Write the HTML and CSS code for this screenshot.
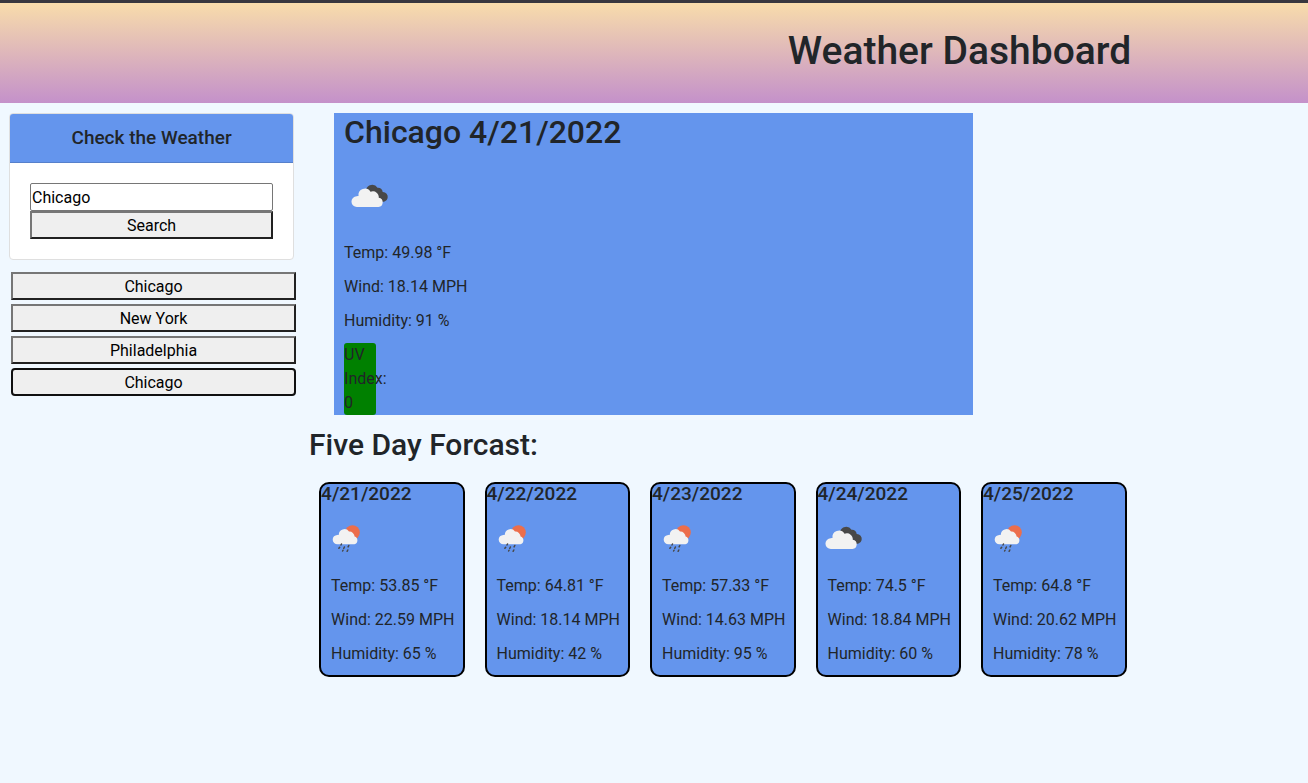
FILE: index.html
```html
<!DOCTYPE html>
<html lang="en">
<head>
<meta charset="utf-8">
<meta name="viewport" content="width=device-width, initial-scale=1">
<title>Weather Dashboard</title>
<link rel="stylesheet" href="styles.css">
</head>
<body>
<svg class="sprite" aria-hidden="true">
  <symbol id="clouds" viewBox="0 0 50 50">
    <path fill="#484848" d="M22 19a6.300 6.300 0 0 1 11.500-2.200 4.500 4.500 0 0 1 5.200 4.200 4.900 4.900 0 1 1-2 9.300z"/>
    <path fill="#f2f2f2" d="M13 36a5.400 5.400 0 0 1-.3-10.800 5 5 0 0 1 1.800-.1 6.500 6.500 0 0 1 12-4.300 6 6 0 0 1 8.300 5.900A4.700 4.700 0 0 1 34.500 36z"/>
  </symbol>
  <symbol id="sun-rain" viewBox="0 0 50 50">
    <circle cx="31.500" cy="19.500" r="7.300" fill="#ec6e4c"/>
    <path fill="#f2f2f2" d="M16.500 31.300a4.700 4.700 0 0 1-.2-9.400 5 5 0 0 1 1.500 0 5.600 5.600 0 0 1 10.200-3.300 5.200 5.200 0 0 1 5.600 5 4 4 0 0 1-.2 7.700z"/>
    <path fill="none" stroke="#484848" stroke-width="1.500" stroke-linecap="round" d="M20.500 31l-.5 1M27.800 32.500l-.7 1.400M18.700 34.300l-.8 1M23.400 34l-.7 1.500M26.800 37l-.7 1.300M22 37.300l-.4.700"/>
  </symbol>
</svg>
<header class="banner"><h1 class="banner-title">Weather Dashboard</h1></header>
<div class="layout">
  <aside class="sidebar">
    <section class="search-card">
      <h2 class="search-title"><label for="city">Check the Weather</label></h2>
      <form class="search-form">
        <input class="city-input" id="city" type="text" value="Chicago">
        <button class="city-button" type="button">Search</button>
      </form>
    </section>
    <div class="history">
      <button class="city-button" type="button">Chicago</button>
      <button class="city-button" type="button">New York</button>
      <button class="city-button" type="button">Philadelphia</button>
      <button class="city-button current" type="button">Chicago</button>
    </div>
  </aside>
  <main class="main">
    <section class="today">
      <h2 class="heading">Chicago 4/21/2022</h2>
      <svg class="icon" role="img" aria-label="Cloudy"><use href="#clouds"/></svg>
      <div class="readings"><p>Temp: 49.98 °F</p><p>Wind: 18.14 MPH</p><p>Humidity: 91 %</p>
      <p class="uv">UV Index: 0</p></div>
    </section>
    <h2 class="heading forecast-heading">Five Day Forcast:</h2>
    <div class="forecast">
      <article class="day"><h3 class="date">4/21/2022</h3><svg class="icon" role="img" aria-label="Rain"><use href="#sun-rain"/></svg><div class="readings"><p>Temp: 53.85 °F</p><p>Wind: 22.59 MPH</p><p>Humidity: 65 %</p></div></article>
      <article class="day"><h3 class="date">4/22/2022</h3><svg class="icon" role="img" aria-label="Rain"><use href="#sun-rain"/></svg><div class="readings"><p>Temp: 64.81 °F</p><p>Wind: 18.14 MPH</p><p>Humidity: 42 %</p></div></article>
      <article class="day"><h3 class="date">4/23/2022</h3><svg class="icon" role="img" aria-label="Rain"><use href="#sun-rain"/></svg><div class="readings"><p>Temp: 57.33 °F</p><p>Wind: 14.63 MPH</p><p>Humidity: 95 %</p></div></article>
      <article class="day"><h3 class="date">4/24/2022</h3><svg class="icon" role="img" aria-label="Cloudy"><use href="#clouds"/></svg><div class="readings"><p>Temp: 74.5 °F</p><p>Wind: 18.84 MPH</p><p>Humidity: 60 %</p></div></article>
      <article class="day"><h3 class="date">4/25/2022</h3><svg class="icon" role="img" aria-label="Rain"><use href="#sun-rain"/></svg><div class="readings"><p>Temp: 64.8 °F</p><p>Wind: 20.62 MPH</p><p>Humidity: 78 %</p></div></article>
    </div>
  </main>
</div>
</body>
</html>
```

FILE: styles.css
```css
* { box-sizing: border-box; }
body {
  margin: 0;
  background: aliceblue;
  color: #212529;
  font: 400 16px/24px "Franklin Gothic Medium", Roboto, "Liberation Sans", sans-serif;
}
h1, h2, h3, p { margin: 0; }
h1, h2 { font-weight: 500; }
.sprite { display: none; }
.banner {
  border-top: 3px solid #38373e;
  padding: 24px 0 28px 60%;
  background: linear-gradient(#f8dcab, #c491ca);
}
.banner-title { font-size: 39px; line-height: 48px; padding-left: 3px; white-space: nowrap; }
.layout { display: flex; align-items: flex-start; gap: 13px; padding: 10px 0 0 9px; }
.sidebar { flex: 0 0 22.1%; }
.search-card {
  margin-right: 2px;
  border: 1px solid #dfdfdf;
  border-radius: 4px;
  background: #fff;
  overflow: hidden;
}
.search-title {
  padding: 12px 20px;
  border-bottom: 1px solid #5680cb;
  background: cornflowerblue;
  font-size: 19px;
  line-height: 24px;
  text-align: center;
}
.search-form { display: flex; flex-direction: column; padding: 20px; }
.city-input, .city-button {
  width: 100%;
  height: 28px;
  color: #000;
  font: inherit;
}
.city-input { padding: 1px; border: 1px solid #767676; border-radius: 2px; background: #fff; }
.city-button {
  padding: 1px 6px 0;
  border: 2px solid;
  border-color: #767676 #212121 #212121 #767676;
  background: #efefef;
}
.city-button.current { border-color: #101010; border-radius: 4px; }
.history { display: flex; flex-direction: column; gap: 4px; margin: 12px 0 0 2px; }
.main { flex: 0 0 63.7%; }
.today { width: 77.2%; margin-left: 25px; padding-left: 10px; background: cornflowerblue; }
.heading { font-size: 32px; line-height: 38px; }
.icon { display: block; width: 50px; height: 50px; }
.today .icon { margin: 20px 0; }
.readings { display: flex; flex-direction: column; gap: 10px; white-space: nowrap; }
.uv { width: 32px; border-radius: 3px; background: green; white-space: normal; }
.forecast-heading { margin: 11px 0 18px; font-size: 30px; }
.forecast { display: grid; grid-template-columns: repeat(5, 1fr); gap: 20px; padding: 0 10px; }
.day { border: 2px solid #000; border-radius: 10px; background: cornflowerblue; }
.date { font-size: 19px; line-height: 20px; font-weight: 500; }
.day .icon { margin: 9px 0 11px; }
.day .readings { padding: 0 0 9px 10px; }
```
